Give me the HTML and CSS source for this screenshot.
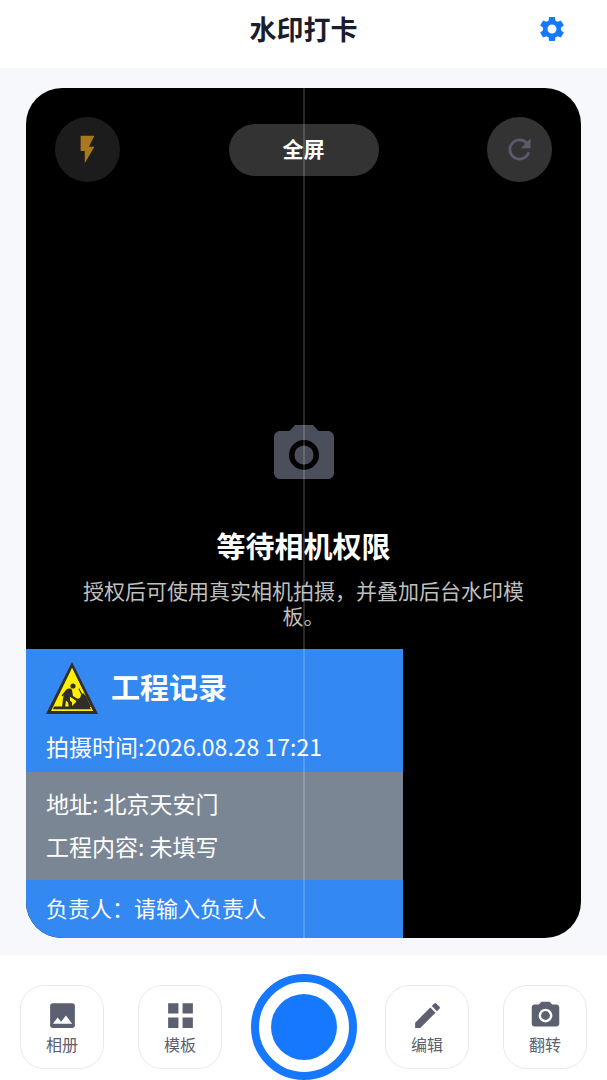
FILE: index.html
```html
<!DOCTYPE html>
<html lang="zh-CN">
<head>
<meta charset="utf-8">
<meta name="viewport" content="width=device-width, initial-scale=1">
<title>水印打卡</title>
<link rel="stylesheet" href="styles.css">
</head>
<body>
<div class="app">
  <header class="header">
    <h1 class="header-title">水印打卡</h1>
    <button class="settings" type="button" aria-label="设置">
      <svg class="icon-settings" viewBox="0 0 24 24" fill="currentColor"><path d="M19.14 12.94c.04-.3.06-.61.06-.94s-.02-.64-.07-.94l2.03-1.58a.49.49 0 0 0 .12-.61l-1.92-3.32a.49.49 0 0 0-.59-.22l-2.39.96c-.5-.38-1.03-.7-1.62-.94l-.36-2.54a.48.48 0 0 0-.48-.41h-3.84a.47.47 0 0 0-.47.41l-.36 2.54c-.59.24-1.13.57-1.62.94l-2.39-.96a.48.48 0 0 0-.59.22L2.74 8.87c-.12.21-.08.47.12.61l2.03 1.58c-.05.3-.09.63-.09.94s.02.64.07.94l-2.03 1.58a.49.49 0 0 0-.12.61l1.92 3.32c.12.22.37.29.59.22l2.39-.96c.5.38 1.03.7 1.62.94l.36 2.54c.05.24.24.41.48.41h3.84c.24 0 .44-.17.47-.41l.36-2.54c.59-.24 1.13-.56 1.62-.94l2.39.96c.22.08.47 0 .59-.22l1.92-3.32a.47.47 0 0 0-.12-.61zM12 15.6a3.6 3.6 0 1 1 0-7.2 3.6 3.6 0 0 1 0 7.2z"/></svg>
    </button>
  </header>

  <main class="stage">
    <section class="camera">
      <div class="toolbar">
        <button class="round round-dim" type="button" aria-label="闪光灯">
          <svg class="icon-tool" viewBox="0 0 24 24" fill="currentColor"><path d="M7 2v11h3v9l7-12h-4l4-8z"/></svg>
        </button>
        <button class="pill" type="button">全屏</button>
        <button class="round" type="button" aria-label="刷新">
          <svg class="icon-tool" viewBox="0 0 24 24" fill="currentColor"><path d="M17.65 6.35A7.96 7.96 0 0 0 12 4a8 8 0 1 0 7.73 10h-2.08A6 6 0 1 1 12 6c1.66 0 3.14.69 4.22 1.78L13 11h7V4z"/></svg>
        </button>
      </div>

      <div class="prompt">
        <svg class="icon-camera" viewBox="0 0 24 24" fill="currentColor"><circle cx="12" cy="12" r="3.2"/><path d="M9 2 7.170 4H4c-1.100 0-2 .9-2 2v12c0 1.100.9 2 2 2h16c1.100 0 2-.9 2-2V6c0-1.100-.9-2-2-2h-3.170L15 2zm3 15a5 5 0 1 1 0-10 5 5 0 0 1 0 10z"/></svg>
        <h2 class="prompt-title">等待相机权限</h2>
        <p class="prompt-text">授权后可使用真实相机拍摄，并叠加后台水印模板。</p>
      </div>

      <div class="watermark">
        <div class="wm-head">
          <div class="wm-brand">
            <svg class="icon-sign" viewBox="0 0 52 52">
              <path fill="#302d2c" d="M26 0 52 52H0z"/>
              <path fill="#fff000" d="M26 6 47 49H5z"/>
              <path fill="#302d2c" d="M8 44.500h33L32.500 27l.8-.8L45 47.200H7z"/>
              <path fill="#fff000" d="M26 6 44 43l-1.500 1L25 9z"/>
              <path fill="#302d2c" d="M25 45l5-5 1-3 3-1 1-3 2-2 3 3 5 11z"/>
              <circle cx="27" cy="24" r="2.600" fill="#302d2c"/>
              <path fill="#302d2c" d="M20 28c2-2 5-2 6 0l1 6 5 3-1 1.500-6-3-1-1v4l2 2v5h-3l-1-5-2-2-1 7h-3l1-9 1-4-1 2-1.500-1z"/>
              <path stroke="#302d2c" stroke-width="1" d="m22 32 10 8"/>
            </svg>
            <h3 class="wm-title">工程记录</h3>
          </div>
          <p class="wm-line">拍摄时间:2026.08.28 17:21</p>
        </div>
        <div class="wm-body">
          <p class="wm-line">地址: 北京天安门</p>
          <p class="wm-line">工程内容: 未填写</p>
        </div>
        <div class="wm-foot">
          <p class="wm-person">负责人：请输入负责人</p>
        </div>
      </div>
    </section>
  </main>

  <footer class="footer">
    <div class="group">
      <button class="action" type="button">
        <svg class="icon-action" viewBox="0 0 24 24" fill="currentColor"><path d="M5 3a2 2 0 0 0-2 2v14a2 2 0 0 0 2 2h14a2 2 0 0 0 2-2V5a2 2 0 0 0-2-2zm0 15 3.500-4.500 2.500 3 3.500-4.500 4.500 6z"/></svg>
        <span>相册</span>
      </button>
      <button class="action" type="button">
        <svg class="icon-action" viewBox="0 0 24 24" fill="currentColor"><path d="M3 3h7.500v7.500H3zM13.500 3H21v7.500h-7.500zM3 13.500h7.500V21H3zM13.500 13.500H21V21h-7.500z"/></svg>
        <span>模板</span>
      </button>
    </div>
    <button class="shutter" type="button" aria-label="拍照"><span class="shutter-core"></span></button>
    <div class="group">
      <button class="action" type="button">
        <svg class="icon-action" viewBox="0 0 24 24" fill="currentColor"><path d="M3 17.250V21h3.750L17.810 9.940l-3.750-3.750zM20.710 7.040a1 1 0 0 0 0-1.410l-2.340-2.340a1 1 0 0 0-1.410 0l-1.830 1.830 3.750 3.750z"/></svg>
        <span>编辑</span>
      </button>
      <button class="action" type="button">
        <svg class="icon-action" viewBox="0 0 24 24" fill="currentColor"><circle cx="12" cy="12" r="3.2"/><path d="M9 2 7.170 4H4c-1.100 0-2 .9-2 2v12c0 1.100.9 2 2 2h16c1.100 0 2-.9 2-2V6c0-1.100-.9-2-2-2h-3.170L15 2zm3 15a5 5 0 1 1 0-10 5 5 0 0 1 0 10z"/></svg>
        <span>翻转</span>
      </button>
    </div>
  </footer>
</div>
</body>
</html>
```

FILE: styles.css
```css
* {
  box-sizing: border-box;
}

body,
h1,
h2,
h3,
p {
  margin: 0;
}

body {
  font-family: "Noto Sans CJK SC", "Noto Sans", sans-serif;
  background: #f7f8fc;
}

button {
  padding: 0;
  border: 0;
  font-family: inherit;
  cursor: pointer;
}

svg {
  display: block;
}

.app {
  display: flex;
  flex-direction: column;
  min-height: 100vh;
}

.header {
  display: grid;
  grid-template-columns: 1fr auto 1fr;
  align-items: center;
  height: 68px;
  padding: 0 40px 10px;
  background: #fff;
}

.header-title {
  grid-column: 2;
  font-size: 27px;
  line-height: 40px;
  font-weight: 700;
  color: #1a1d2e;
}

.settings {
  justify-self: end;
  background: none;
  color: #1677ff;
}

.icon-settings {
  width: 30px;
  height: 30px;
}

.stage {
  display: flex;
  flex: 1;
  padding: 20px 26px 17px;
}

.camera {
  position: relative;
  display: flex;
  flex: 1;
  flex-direction: column;
  border-radius: 36px;
  background: #000;
  overflow: hidden;
}

/* Vertical framing guide drawn above the preview */
.camera::after {
  content: "";
  position: absolute;
  top: 0;
  bottom: 0;
  left: 50%;
  width: 2px;
  margin-left: -1px;
  background: rgba(255, 255, 255, 0.16);
  pointer-events: none;
}

.toolbar {
  display: flex;
  align-items: center;
  justify-content: space-between;
  padding: 29px 29px 0;
}

.round {
  display: grid;
  place-items: center;
  width: 65px;
  height: 65px;
  border-radius: 50%;
  background: #333;
  color: #5a5c6d;
}

.round-dim {
  background: #1c1c1c;
  color: #a8781a;
}

.icon-tool {
  width: 33px;
  height: 33px;
}

.pill {
  width: 150px;
  height: 52px;
  padding-bottom: 4px;
  border-radius: 26px;
  background: #333;
  color: #fff;
  font-size: 21px;
  font-weight: 700;
}

.prompt {
  display: flex;
  flex: 1;
  flex-direction: column;
  align-items: center;
  justify-content: flex-end;
  padding: 0 52px 21px;
  text-align: center;
}

.icon-camera {
  width: 72px;
  height: 72px;
  color: #4b4e5b;
}

.prompt-title {
  margin-top: 33px;
  font-size: 29px;
  line-height: 42px;
  font-weight: 700;
  color: #fff;
}

.prompt-text {
  margin-top: 12px;
  font-size: 21px;
  line-height: 25px;
  color: #bfbfbf;
}

.watermark {
  align-self: flex-start;
  width: 68%;
  color: #fff;
}

.wm-head {
  padding: 13px 20px 4px;
  background: #3388f2;
}

.wm-brand {
  display: flex;
  align-items: flex-start;
  gap: 13px;
}

.icon-sign {
  width: 52px;
  height: 52px;
}

.wm-title {
  font-size: 29px;
  line-height: 48px;
  font-weight: 700;
}

.wm-line,
.wm-person {
  font-size: 23px;
  line-height: 43px;
}

.wm-head .wm-line {
  margin-top: 11px;
}

.wm-body {
  padding: 10px 20px 12px;
  background: #7b8694;
}

.wm-foot {
  padding: 6px 20px 9px;
  background: #3388f2;
}

.wm-person {
  font-size: 22px;
}

.footer {
  display: flex;
  align-items: center;
  justify-content: space-between;
  padding: 19px 20px 0;
  background: #fff;
}

.group {
  display: flex;
  gap: 34px;
}

.action {
  display: flex;
  flex-direction: column;
  align-items: center;
  justify-content: center;
  width: 84px;
  height: 84px;
  border: 1px solid #e8eaef;
  border-radius: 24px;
  background: #fff;
  color: #5c6070;
  font-size: 16px;
  line-height: 24px;
}

.icon-action {
  width: 33px;
  height: 33px;
}

.shutter {
  display: grid;
  place-items: center;
  width: 106px;
  height: 106px;
  border: 8px solid #1677ff;
  border-radius: 50%;
  background: #fff;
}

.shutter-core {
  width: 66px;
  height: 66px;
  border-radius: 50%;
  background: #1677ff;
}
```
